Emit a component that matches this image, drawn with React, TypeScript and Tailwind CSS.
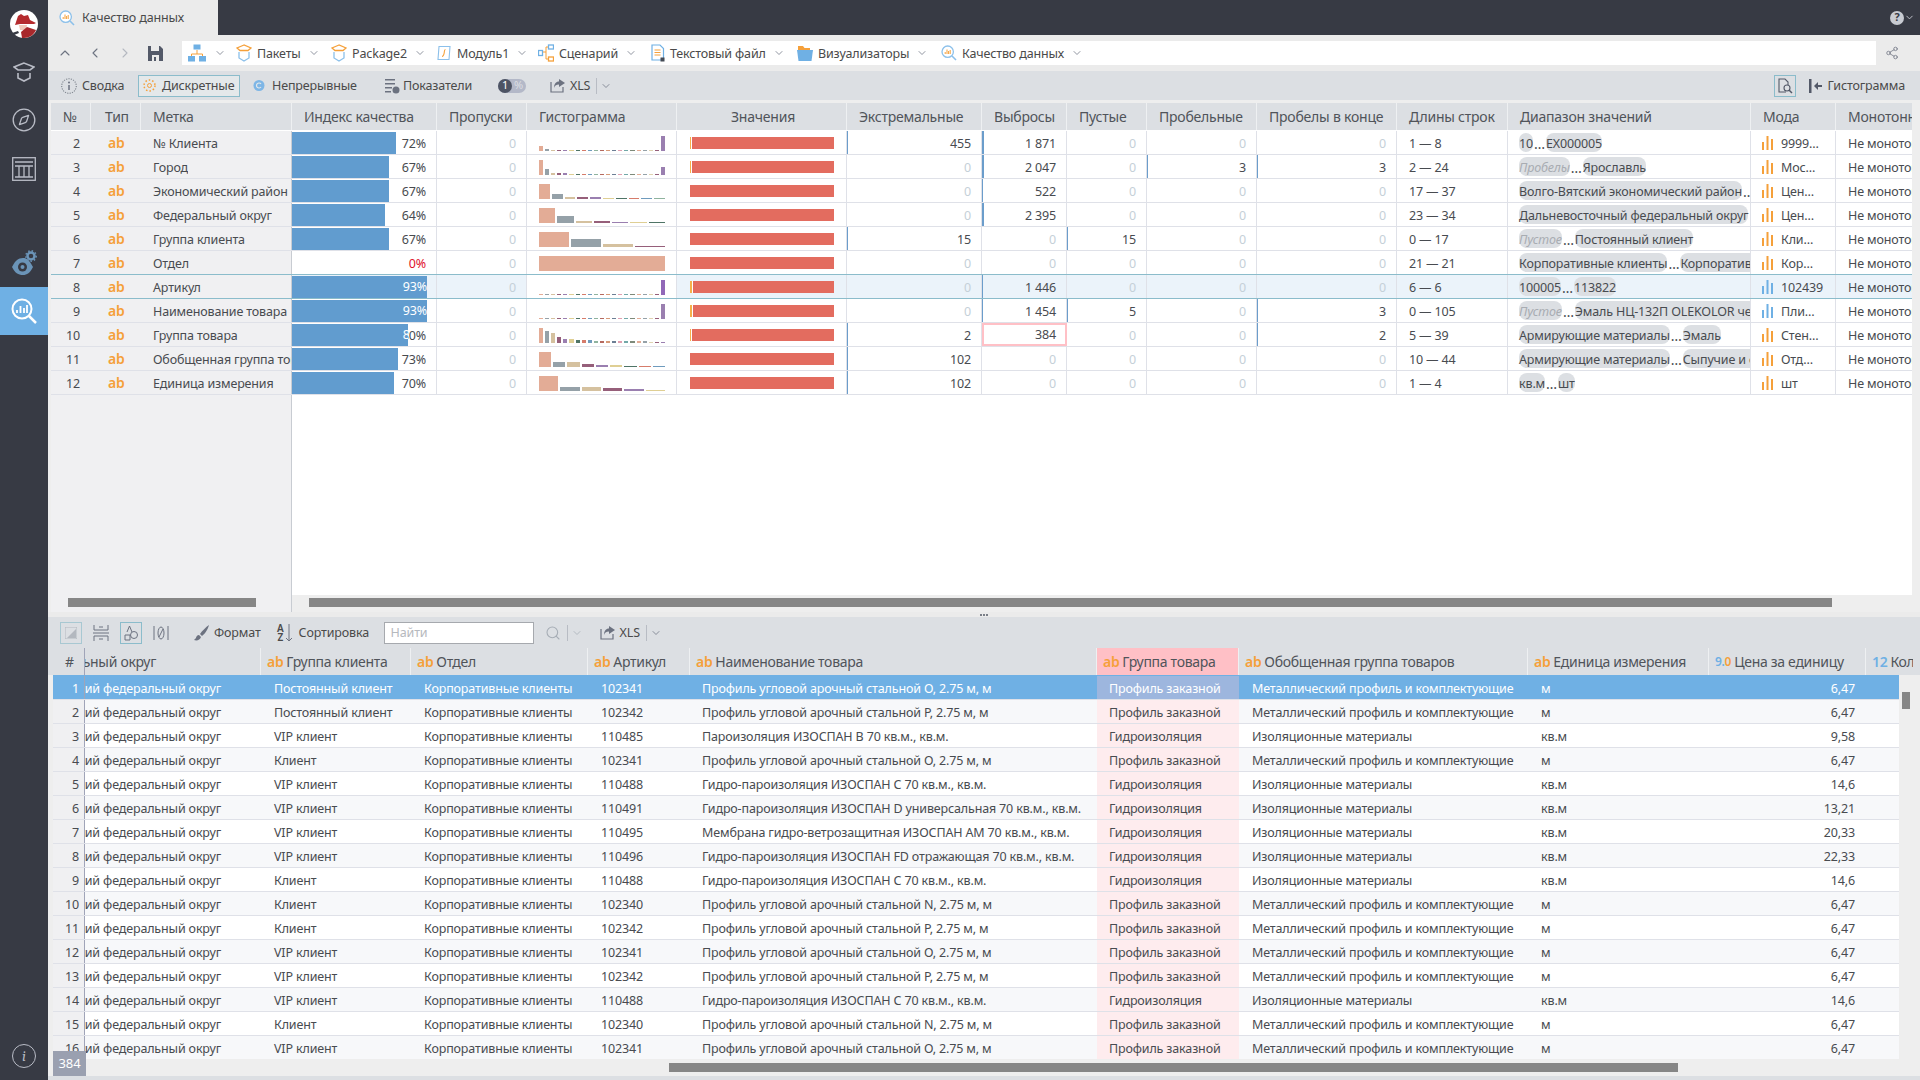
import React from "react";
import { ChevronDown, ChevronLeft, ChevronRight, ChevronUp, Compass, Search, Share2 } from "lucide-react";

const Chev = () => <ChevronDown size={12} strokeWidth={1.5} className="text-[#6b7280] shrink-0" />;

const QualityIcon = ({ size = 16 }: { size?: number }) => (
  <svg width={size} height={size} viewBox="0 0 16 16" fill="none" className="shrink-0">
    <circle cx="6.7" cy="6.7" r="5.7" stroke="#8cc0ea" strokeWidth="1.3" fill="#fff" />
    <path d="M11 11l4 4" stroke="#8cc0ea" strokeWidth="1.6" />
    <path d="M4.2 9V7M6 9V4.5M7.6 9V6M9.2 9V5" stroke="#f5a03a" strokeWidth="1" />
  </svg>
);

const BoxIcon = () => (
  <svg width="16" height="18" viewBox="0 0 16 18" fill="none" className="shrink-0">
    <path d="M8 1L1 4l3 2.5h8L15 4 8 1z" stroke="#f5a03a" strokeWidth="1.3" />
    <path d="M3 8v6l5 3 5-3V8" stroke="#8cc0ea" strokeWidth="1.3" />
  </svg>
);

const NavItem = ({ icon, label, className }: { icon: React.ReactNode; label: string; className: string }) => (
  <div className={`flex items-center ${className}`}>
    {icon}
    <span className="ml-[5px] mr-[7px] pt-[2px] whitespace-nowrap">{label}</span>
    <Chev />
  </div>
);

const TreeIcon = () => (
  <svg width="18" height="18" viewBox="0 0 18 18" fill="none" className="shrink-0">
    <rect x="5.5" y="0.5" width="7" height="5" fill="#6fb0e4" />
    <path d="M9 6v4M3.5 12v-2h11v2" stroke="#f5a03a" />
    <rect x="0" y="12" width="7" height="5.5" fill="#6fb0e4" />
    <rect x="11" y="12" width="7" height="5.5" fill="#6fb0e4" />
  </svg>
);

const ScriptIcon = () => (
  <svg width="16" height="16" viewBox="0 0 16 16" fill="none" className="shrink-0">
    <path d="M3 1.5h11l-1 13H2z" stroke="#8cc0ea" strokeWidth="1.1" />
    <path d="M9.5 4.5c-1.5 0-1 2-1.3 3.5S7.5 11.5 6 11.5" stroke="#f5a03a" strokeWidth="1.1" />
  </svg>
);

const ScenarioIcon = () => (
  <svg width="16" height="18" viewBox="0 0 16 18" fill="none" className="shrink-0">
    <rect x="0.5" y="6.5" width="4" height="5" stroke="#6fb0e4" strokeWidth="1.3" />
    <rect x="10.5" y="1" width="5" height="4" stroke="#6fb0e4" strokeWidth="1.3" />
    <rect x="10.5" y="13" width="5" height="4" stroke="#f5a03a" strokeWidth="1.3" />
    <path d="M5 8h3V3h2M8 8v7h2" stroke="#f5a03a" />
  </svg>
);

const FileIcon = () => (
  <svg width="14" height="18" viewBox="0 0 14 18" fill="none" className="shrink-0">
    <path d="M1 1h8l3.5 3.5V16H1z" stroke="#6fb0e4" strokeWidth="1.2" />
    <path d="M3.5 6h6M3.5 8.5h6M3.5 11h6" stroke="#f5a03a" />
    <rect x="9.5" y="13.5" width="4" height="4" fill="#444b55" />
  </svg>
);

const FolderIcon = () => (
  <svg width="16" height="15" viewBox="0 0 16 15" className="shrink-0">
    <path d="M1 0h5l1.5 2H13v2H1z" fill="#f5a03a" />
    <path d="M0 4h16l-1.5 11h-13z" fill="#6fb0e4" />
  </svg>
);

const TopBar = () => (
  <div className="h-[35px] flex bg-[#373a44] relative shrink-0">
    <div className="w-[170px] bg-[#ebebeb] flex items-center pl-[11px] gap-[7px] text-[#4a4a4a]">
      <QualityIcon />
      <span className="pt-[2px]">Качество данных</span>
    </div>
    <div className="ml-auto mr-[5px] flex items-center text-[#c8cbd2]">
      <div className="w-[14px] h-[14px] rounded-full bg-[#c8cbd2] text-[#373a44] text-[11px] font-bold flex items-center justify-center">?</div>
      <ChevronDown size={11} />
    </div>
  </div>
);

const NavBar = () => (
  <div className="h-[36px] flex items-center bg-[#ebebeb] shrink-0">
    <div className="w-[134px] flex items-center pl-[9px] text-[#6c7280]">
      <ChevronUp size={16} strokeWidth={1.6} />
      <ChevronLeft size={16} strokeWidth={1.6} className="ml-[14px]" />
      <ChevronRight size={16} strokeWidth={1.6} className="ml-[14px] text-[#b4b8c0]" />
      <svg width="15" height="15" viewBox="0 0 15 15" className="ml-[15px]">
        <path d="M0 0h12l3 3v12H0z" fill="#535968" />
        <rect x="3" y="0" width="8" height="5" fill="#ebebeb" />
        <rect x="4" y="9" width="7" height="6" fill="#ebebeb" />
        <rect x="6" y="11" width="2" height="4" fill="#535968" />
      </svg>
    </div>
    <div className="w-[1694px] h-[24px] bg-white flex items-center pl-[6px] text-[#4a4a4a]">
      <div className="w-[48px] flex items-center gap-[8px]">
        <TreeIcon />
        <Chev />
      </div>
      <NavItem className="w-[95px]" icon={<BoxIcon />} label="Пакеты" />
      <NavItem className="w-[105px]" icon={<BoxIcon />} label="Package2" />
      <NavItem className="w-[102px]" icon={<ScriptIcon />} label="Модуль1" />
      <NavItem className="w-[113px]" icon={<ScenarioIcon />} label="Сценарий" />
      <NavItem className="w-[146px]" icon={<FileIcon />} label="Текстовый файл" />
      <NavItem className="w-[144px]" icon={<FolderIcon />} label="Визуализаторы" />
      <NavItem className="w-[150px]" icon={<QualityIcon />} label="Качество данных" />
    </div>
    <Share2 size={14} strokeWidth={1.3} className="ml-[9px] text-[#6c7280]" />
  </div>
);

const XlsButton = () => (
  <div className="flex items-center text-[#4a4a4a]">
    <svg width="16" height="15" viewBox="0 0 16 15" fill="none">
      <path d="M1 4v10h12V9" stroke="#6c7280" strokeWidth="1.2" />
      <path d="M9 1l6 4-6 4V6.5C6 6.5 4.5 8 4 10c0-4 2-6.5 5-6.5z" fill="#6c7280" />
    </svg>
    <span className="ml-[4px] pt-[2px]">XLS</span>
    <div className="w-px h-[16px] bg-[#b8bcc4] ml-[6px] mr-[3px]" />
    <Chev />
  </div>
);

const SubBar = () => (
  <div className="h-[29px] flex items-center bg-[#dcdfe3] text-[#4a4a4a] shrink-0">
    <div className="w-[29px] flex items-center justify-end">
      <svg width="16" height="16" viewBox="0 0 16 16" fill="none">
        <circle cx="8" cy="8" r="7.3" stroke="#7a808a" strokeWidth="1.1" strokeDasharray="1.2 1.2" />
        <circle cx="8" cy="4.5" r="1" fill="#6c7280" />
        <path d="M8 7v5" stroke="#6c7280" strokeWidth="1.5" />
      </svg>
    </div>
    <span className="ml-[5px] w-[56px] pt-[2px]">Сводка</span>
    <div className="w-[102px] h-[22px] border border-[#8bbccb] flex items-center pl-[4px] gap-[6px] bg-[#e4e8ea]">
      <svg width="13" height="13" viewBox="0 0 13 13" fill="none">
        <circle cx="6.5" cy="6.5" r="5.5" stroke="#f5a03a" strokeWidth="1.5" strokeDasharray="1.5 2" />
        <circle cx="6.5" cy="6.5" r="2" stroke="#f5a03a" />
      </svg>
      <span className="pt-[2px]">Дискретные</span>
    </div>
    <div className="ml-[13px] w-[132px] flex items-center gap-[7px]">
      <svg width="12" height="13" viewBox="0 0 12 13" fill="none">
        <circle cx="6" cy="6.5" r="5.5" fill="#7eb6e6" />
        <path d="M8 5a2.5 2.5 0 1 0 0 3" stroke="#e4e8ea" strokeWidth="1.2" />
      </svg>
      <span className="pt-[2px]">Непрерывные</span>
    </div>
    <div className="flex items-center w-[113px] gap-[3px]">
      <svg width="15" height="16" viewBox="0 0 15 16" fill="#6c7280">
        <path d="M0 1h10v1.5H0zM0 5h10v1.5H0zM0 9h7v1.5H0zM0 13h6v1.5H0z" />
        <circle cx="11" cy="12" r="3.5" />
      </svg>
      <span className="pt-[2px]">Показатели</span>
    </div>
    <div className="w-[28px] h-[14px] rounded-full bg-[#b3b8c8] flex items-center text-[11px] text-white">
      <div className="w-[14px] h-[14px] rounded-full bg-[#4d5464] flex items-center justify-center">1</div>
      <span className="ml-[2px] text-[#dcdfe3]">%</span>
    </div>
    <div className="ml-[24px]">
      <XlsButton />
    </div>
    <div className="ml-auto w-[22px] h-[22px] border border-[#8bbccb] flex items-center justify-center mr-[13px]">
      <svg width="15" height="16" viewBox="0 0 15 16" fill="none" stroke="#535968" strokeWidth="1.1">
        <path d="M8 14H1V1h6l3 3v3" />
        <circle cx="9" cy="10" r="3" />
        <path d="M11 12l3 3" strokeWidth="1.5" />
      </svg>
    </div>
    <svg width="14" height="14" viewBox="0 0 14 14">
      <rect x="0" y="0" width="2.5" height="14" fill="#535968" />
      <path d="M5 7l4-4v3h4v2H9v3z" fill="#535968" />
    </svg>
    <span className="ml-[4px] mr-[15px] pt-[2px]">Гистограмма</span>
  </div>
);

const palette = [
  "bg-[#e3ac96]", "bg-[#95a1a8]", "bg-[#d5c19f]", "bg-[#965f7a]", "bg-[#9a7fb0]", "bg-[#dfcf94]", "bg-[#4f7466]",
  "bg-[#d67c6b]", "bg-[#6f9bbd]", "bg-[#8fb39e]", "bg-[#b5695f]", "bg-[#d69a78]", "bg-[#6c7f95]", "bg-[#e09fb0]",
  "bg-[#72a8a8]", "bg-[#7e8a7a]", "bg-[#e3ac96]", "bg-[#95a1a8]", "bg-[#dfd3b0]", "bg-[#965f7a]",
];

const ones = (n: number) => Array.from({ length: n }, () => 1);

interface TopRow {
  no: number;
  label: string;
  pct: number;
  hist: number[];
  orange: number;
  extreme: number;
  outliers: string;
  empty: number;
  spaces: number;
  trailing: number;
  lengths: string;
  from: string;
  to: string;
  mode: string;
  marks: string[];
}

const topRows: TopRow[] = [
  { no: 2, label: "№ Клиента", pct: 72, hist: [5, 2, ...ones(18), 15], orange: 1, extreme: 455, outliers: "1 871", empty: 0, spaces: 0, trailing: 0, lengths: "1 — 8", from: "10", to: "EX000005", mode: "9999…", marks: ["e1", "o2"] },
  { no: 3, label: "Город", pct: 67, hist: [15, 6, 2, 2, 2, ...ones(15), 8], orange: 1, extreme: 0, outliers: "2 047", empty: 0, spaces: 3, trailing: 3, lengths: "2 — 24", from: "Пробелы", to: "Ярославль", mode: "Мос…", marks: ["o2", "s1", "t1"] },
  { no: 4, label: "Экономический район", pct: 67, hist: [15, 5, 2, 2, 2, 1, 1, 1, 1, 1], orange: 0, extreme: 0, outliers: "522", empty: 0, spaces: 0, trailing: 0, lengths: "17 — 37", from: "Волго-Вятский экономический район", to: "", mode: "Цен…", marks: ["o1"] },
  { no: 5, label: "Федеральный округ", pct: 64, hist: [15, 7, 2, 2, 1, 1, 1], orange: 0, extreme: 0, outliers: "2 395", empty: 0, spaces: 0, trailing: 0, lengths: "23 — 34", from: "Дальневосточный федеральный округ", to: "", mode: "Цен…", marks: ["o2"] },
  { no: 6, label: "Группа клиента", pct: 67, hist: [15, 8, 3, 1], orange: 0, extreme: 15, outliers: "0", empty: 15, spaces: 0, trailing: 0, lengths: "0 — 17", from: "Пустое", to: "Постоянный клиент", mode: "Кли…", marks: ["e1", "m1"] },
  { no: 7, label: "Отдел", pct: 0, hist: [15], orange: 0, extreme: 0, outliers: "0", empty: 0, spaces: 0, trailing: 0, lengths: "21 — 21", from: "Корпоративные клиенты", to: "Корпоративные клиенты", mode: "Кор…", marks: [] },
  { no: 8, label: "Артикул", pct: 93, hist: [...ones(20), 15], orange: 2, extreme: 0, outliers: "1 446", empty: 0, spaces: 0, trailing: 0, lengths: "6 — 6", from: "100005", to: "113822", mode: "102439", marks: ["o1"] },
  { no: 9, label: "Наименование товара", pct: 93, hist: [...ones(20), 15], orange: 2, extreme: 0, outliers: "1 454", empty: 5, spaces: 0, trailing: 3, lengths: "0 — 105", from: "Пустое", to: "Эмаль НЦ-132П OLEKOLOR черная", mode: "Пли…", marks: ["o1", "m1", "t1"] },
  { no: 10, label: "Группа товара", pct: 80, hist: [15, 12, 10, 6, 4, 4, 3, 3, 3, 2, 2, 2, 2, 2, 2, 2, 2, 2, 1, 1, 1], orange: 1, extreme: 2, outliers: "384", empty: 0, spaces: 0, trailing: 2, lengths: "5 — 39", from: "Армирующие материалы", to: "Эмаль", mode: "Стен…", marks: ["e1", "t1"] },
  { no: 11, label: "Обобщенная группа товаров", pct: 73, hist: [15, 5, 5, 3, 2, 2, 1, 1, 1], orange: 0, extreme: 102, outliers: "0", empty: 0, spaces: 0, trailing: 0, lengths: "10 — 44", from: "Армирующие материалы", to: "Сыпучие и смеси", mode: "Отд…", marks: ["e1"] },
  { no: 12, label: "Единица измерения", pct: 70, hist: [15, 4, 4, 3, 2, 1], orange: 0, extreme: 102, outliers: "0", empty: 0, spaces: 0, trailing: 0, lengths: "1 — 4", from: "кв.м", to: "шт", mode: "шт", marks: ["e1"] },
];

const HeadCell = ({ className, children }: { className: string; children: React.ReactNode }) => (
  <div className={`h-full flex items-center border-r border-[#eef0f2] whitespace-nowrap overflow-hidden shrink-0 ${className}`}>{children}</div>
);

const TopHeader = () => (
  <div className="h-[27px] flex bg-[#dcdfe3] text-[#50545a] text-[14px] tracking-[-0.22px] shrink-0">
    <HeadCell className="w-[40px] pl-[12px]">№</HeadCell>
    <HeadCell className="w-[50px] pl-[14px]">Тип</HeadCell>
    <HeadCell className="w-[151px] pl-[12px]">Метка</HeadCell>
    <HeadCell className="w-[145px] pl-[12px]">Индекс качества</HeadCell>
    <HeadCell className="w-[90px] pl-[12px]">Пропуски</HeadCell>
    <HeadCell className="w-[150px] pl-[12px]">Гистограмма</HeadCell>
    <HeadCell className="w-[170px] justify-center pl-[3px]">Значения</HeadCell>
    <HeadCell className="w-[135px] pl-[12px]">Экстремальные</HeadCell>
    <HeadCell className="w-[85px] pl-[12px]">Выбросы</HeadCell>
    <HeadCell className="w-[80px] pl-[12px]">Пустые</HeadCell>
    <HeadCell className="w-[110px] pl-[12px]">Пробельные</HeadCell>
    <HeadCell className="w-[140px] pl-[12px]">Пробелы в конце</HeadCell>
    <HeadCell className="w-[111px] pl-[12px]">Длины строк</HeadCell>
    <HeadCell className="w-[243px] pl-[12px]">Диапазон значений</HeadCell>
    <HeadCell className="w-[85px] pl-[12px]">Мода</HeadCell>
    <HeadCell className="w-[76px] pl-[12px] border-r-0">Монотонность</HeadCell>
  </div>
);

const NumCell = ({ value, width, mark }: { value: string | number; width: string; mark?: string }) => {
  const zero = value === 0 || value === "0";
  const markClass = mark === "2" ? "border-l-2 border-l-[#6b9dcb]" : mark === "1" ? "border-l border-l-[#6b9dcb]" : "";
  return (
    <div className={`h-full flex items-center justify-end pt-[3px] pr-[10px] border-r border-[#dfe1e8] shrink-0 ${width} ${markClass} ${zero ? "text-[#c5d0d8]" : ""}`}>
      {value}
    </div>
  );
};

const markOf = (row: TopRow, key: string) => row.marks.find((m) => m[0] === key)?.[1];

const PctCell = ({ pct }: { pct: number }) => {
  const inner = "w-[145px] h-full flex items-center justify-end pt-[3px] pr-[10px]";
  return (
    <div className={`relative shrink-0 border-r border-[#dfe1e8] ${inner} ${pct === 0 ? "text-[#e0112b]" : ""}`}>
      {pct}%
      {pct > 0 && (
        <div className="absolute left-0 top-[1px] bottom-0 bg-[#619ccf] overflow-hidden text-white" style={{ width: pct * 1.45 }}>
          <div className={`${inner} -mt-px`}>{pct}%</div>
        </div>
      )}
    </div>
  );
};

const Histogram = ({ bars, strong }: { bars: number[]; strong: boolean }) => (
  <div className="w-[150px] h-full bg-white border-r border-[#dfe1e8] pl-[12px] shrink-0">
    <div className="w-[126px] h-[20px] flex items-end gap-[2px]">
      {bars.map((h, i) => {
        const last = bars.length > 15 && i === bars.length - 1;
        const color = last ? (strong ? "bg-[#9168b8]" : "bg-[#9a7fb0]") : palette[i % palette.length];
        return <div key={i} className={`flex-1 ${color}`} style={{ height: h }} />;
      })}
    </div>
  </div>
);

const ValueCell = ({ orange }: { orange: number }) => (
  <div className="w-[170px] h-full flex items-center pl-[13px] border-r border-[#dfe1e8] shrink-0">
    <div className="w-[144px] h-[12px] flex bg-[#e36c5f]">
      {orange > 0 && (
        <div className={`h-full border-r border-white bg-[#f5b04a] box-content ${orange === 2 ? "w-[2px]" : "w-[1px]"}`} />
      )}
    </div>
  </div>
);

const Chip = ({ text }: { text: string }) => {
  const muted = text === "Пробелы" || text === "Пустое";
  return (
    <span className={`h-[19px] leading-[21px] rounded-[8px] bg-[#dcdfe3] whitespace-nowrap ${muted ? "italic text-[#a8acb2]" : ""}`}>{text}</span>
  );
};

const RangeCell = ({ from, to }: { from: string; to: string }) => (
  <div className="w-[243px] h-full flex items-center pl-[11px] overflow-hidden border-r border-[#dfe1e8] shrink-0">
    <Chip text={from} />
    <span className="w-[13px] text-center text-[14px] pt-[2px] shrink-0">…</span>
    {to && <Chip text={to} />}
  </div>
);

const ModeCell = ({ value, blue }: { value: string; blue: boolean }) => (
  <div className="w-[85px] h-full flex items-center pl-[11px] border-r border-[#dfe1e8] shrink-0">
    <svg width="11" height="14" viewBox="0 0 11 14" className={blue ? "text-[#6fb0e4]" : "text-[#f5a03a]"} fill="currentColor">
      <rect x="0" y="6" width="2" height="8" />
      <rect x="4.5" y="0" width="2" height="14" />
      <rect x="9" y="3" width="2" height="11" />
    </svg>
    <span className="ml-[8px] pt-[3px]">{value}</span>
  </div>
);

const TopTableRow = ({ row, index }: { row: TopRow; index: number }) => {
  const active = index === 6;
  const teal = index === 6 || index === 7;
  return (
    <div className={`h-[24px] flex border-t shrink-0 ${index === 0 ? "border-t-white" : teal ? "border-t-[#8bbccb]" : "border-t-[#dfe1e8]"} ${active ? "bg-[#ebf3fa]" : "bg-white"}`}>
      <div className="w-[241px] h-full flex items-center pt-[3px] bg-[#f0f0f2] border-r border-[#c8ccd2] shrink-0">
        <div className="w-[29px] text-right shrink-0">{row.no}</div>
        <div className="w-[61px] pl-[28px] -mt-[3px] text-[#f5a03a] text-[14px] font-semibold shrink-0">ab</div>
        <div className="pl-[12px] whitespace-nowrap overflow-hidden">{row.label}</div>
      </div>
      <PctCell pct={row.pct} />
      <NumCell value={0} width="w-[90px]" />
      <Histogram bars={row.hist} strong={row.no === 8} />
      <ValueCell orange={row.orange} />
      <NumCell value={row.extreme} width="w-[135px]" mark={markOf(row, "e")} />
      {row.outliers === "384" ? (
        <div className="w-[85px] h-full flex items-center justify-end pt-[2px] pr-[9px] border-2 border-[#ffc0c6] shrink-0">384</div>
      ) : (
        <NumCell value={row.outliers} width="w-[85px]" mark={markOf(row, "o")} />
      )}
      <NumCell value={row.empty} width="w-[80px]" mark={markOf(row, "m")} />
      <NumCell value={row.spaces} width="w-[110px]" mark={markOf(row, "s")} />
      <NumCell value={row.trailing} width="w-[140px]" mark={markOf(row, "t")} />
      <div className="w-[111px] h-full flex items-center pt-[3px] pl-[12px] border-r border-[#dfe1e8] shrink-0">{row.lengths}</div>
      <RangeCell from={row.from} to={row.to} />
      <ModeCell value={row.mode} blue={row.no === 8 || row.no === 9} />
      <div className="w-[76px] h-full flex items-center pt-[3px] pl-[12px] overflow-hidden whitespace-nowrap shrink-0">Не монотонно</div>
    </div>
  );
};

const TopTable = () => (
  <div className="h-[512px] flex flex-col bg-[#eeeeee] pl-[3px] pr-[8px] pt-[3px] shrink-0">
    <TopHeader />
    {topRows.map((row, i) => (
      <TopTableRow key={row.no} row={row} index={i} />
    ))}
    <div className="flex-1 flex border-t border-t-[#dfe1e8] bg-white">
      <div className="w-[241px] bg-[#f0f0f2] border-r border-[#c8ccd2]" />
    </div>
    <div className="h-[17px] flex shrink-0">
      <div className="w-[241px] bg-[#f0f0f2] border-r border-[#c8ccd2] pl-[17px] pt-[3px]">
        <div className="w-[188px] h-[9px] bg-[#868686]" />
      </div>
      <div className="ml-[17px] mt-[3px] w-[1523px] h-[9px] bg-[#868686]" />
    </div>
  </div>
);

const Splitter = () => (
  <div className="h-[5px] bg-[#ebebeb] flex justify-center items-center gap-[1px] shrink-0">
    <div className="w-[2px] h-[2px] bg-[#7a7f88]" />
    <div className="w-[2px] h-[2px] bg-[#7a7f88]" />
    <div className="w-[2px] h-[2px] bg-[#7a7f88]" />
  </div>
);

const BottomBar = () => (
  <div className="h-[31px] flex items-center bg-[#dcdfe3] text-[#4a4a4a] pl-[12px] shrink-0">
    <div className="w-[22px] h-[22px] border border-[#a8c8d2] flex items-center justify-center">
      <svg width="12" height="12" viewBox="0 0 12 12">
        <path d="M0 0h12v12H0z" fill="none" stroke="#b3b8bf" />
        <path d="M11 2v9H2z" fill="#b3b8bf" />
      </svg>
    </div>
    <svg width="16" height="18" viewBox="0 0 16 18" fill="none" stroke="#6c7280" className="ml-[11px]">
      <path d="M1 1v5h14V1M1 17v-5h14v5M0 9h16" />
      <path d="M6 3h4M6 15h4" />
    </svg>
    <div className="ml-[11px] w-[22px] h-[22px] border border-[#8bbccb] flex items-center justify-center">
      <svg width="14" height="16" viewBox="0 0 14 16" fill="none" stroke="#6c7280">
        <path d="M3 7l2.5-6L8 7M1 10h5v5H1z" />
        <circle cx="10" cy="10" r="3.5" />
      </svg>
    </div>
    <svg width="16" height="14" viewBox="0 0 16 14" fill="none" stroke="#6c7280" className="ml-[11px]">
      <path d="M1 0v14M15 0v14" />
      <ellipse cx="8" cy="7" rx="3" ry="6" />
      <path d="M6 11l4-8" />
    </svg>
    <svg width="16" height="16" viewBox="0 0 16 16" className="ml-[25px]" fill="#6c7280">
      <path d="M15 0c-3 2-7 6-9 9l2 2c3-2 6-7 7-11zM5 10c-2 0-3 2-3 3l-2 2c3 1 6 0 7-3z" />
    </svg>
    <span className="ml-[4px] w-[46px] pt-[2px]">Формат</span>
    <div className="ml-[17px] flex items-center text-[#4a4a4a]">
      <div className="text-[10px] leading-[9px] text-center font-semibold">
        A
        <br />Z
      </div>
      <svg width="8" height="18" viewBox="0 0 8 18" fill="none" stroke="#6c7280" className="ml-[1px]">
        <path d="M4 0v17M1 14l3 3 3-3" />
      </svg>
    </div>
    <span className="ml-[6px] w-[71px] pt-[2px] whitespace-nowrap">Сортировка</span>
    <div className="ml-[14px] w-[150px] h-[22px] bg-white border border-[#a6a9ae] flex items-center pl-[6px] pt-px text-[#b6b9be]">Найти</div>
    <Search size={16} strokeWidth={1.6} className="ml-[11px] text-[#a6adb5]" />
    <div className="w-px h-[16px] bg-[#b8bcc4] ml-[6px] mr-[3px]" />
    <ChevronDown size={12} strokeWidth={1.5} className="text-[#a6adb5]" />
    <div className="ml-[17px]">
      <XlsButton />
    </div>
  </div>
);

const names = [
  "Профиль угловой арочный стальной О, 2.75 м, м",
  "Профиль угловой арочный стальной Р, 2.75 м, м",
  "Пароизоляция ИЗОСПАН В 70 кв.м., кв.м.",
  "Профиль угловой арочный стальной О, 2.75 м, м",
  "Гидро-пароизоляция ИЗОСПАН С 70 кв.м., кв.м.",
  "Гидро-пароизоляция ИЗОСПАН D универсальная 70 кв.м., кв.м.",
  "Мембрана гидро-ветрозащитная ИЗОСПАН АМ 70 кв.м., кв.м.",
  "Гидро-пароизоляция ИЗОСПАН FD отражающая 70 кв.м., кв.м.",
  "Гидро-пароизоляция ИЗОСПАН С 70 кв.м., кв.м.",
  "Профиль угловой арочный стальной N, 2.75 м, м",
  "Профиль угловой арочный стальной Р, 2.75 м, м",
  "Профиль угловой арочный стальной О, 2.75 м, м",
  "Профиль угловой арочный стальной Р, 2.75 м, м",
  "Гидро-пароизоляция ИЗОСПАН С 70 кв.м., кв.м.",
  "Профиль угловой арочный стальной N, 2.75 м, м",
  "Профиль угловой арочный стальной О, 2.75 м, м",
];
const clients = ["Постоянный клиент", "Постоянный клиент", "VIP клиент", "Клиент", "VIP клиент", "VIP клиент", "VIP клиент", "VIP клиент", "Клиент", "Клиент", "Клиент", "VIP клиент", "VIP клиент", "VIP клиент", "Клиент", "VIP клиент"];
const articles = ["102341", "102342", "110485", "102341", "110488", "110491", "110495", "110496", "110488", "102340", "102342", "102341", "102342", "110488", "102340", "102341"];
const prices = ["6,47", "6,47", "9,58", "6,47", "14,6", "13,21", "20,33", "22,33", "14,6", "6,47", "6,47", "6,47", "6,47", "14,6", "6,47", "6,47"];

const Ab = () => <span className="text-[#f5a03a] font-semibold mr-[3px]">ab</span>;

const BottomHeader = () => (
  <div className="h-[27px] flex pl-[5px] bg-[#dcdfe3] text-[#50545a] text-[14px] tracking-[-0.3px] shrink-0">
    <div className="w-[32px] h-full flex items-center pl-[12px] border-r border-[#a0a4b8] shrink-0">#</div>
    <HeadCell className="w-[176px] justify-end pr-[104px]">Федеральный округ</HeadCell>
    <HeadCell className="w-[150px] pl-[6px]"><Ab />Группа клиента</HeadCell>
    <HeadCell className="w-[177px] pl-[6px]"><Ab />Отдел</HeadCell>
    <HeadCell className="w-[102px] pl-[6px]"><Ab />Артикул</HeadCell>
    <HeadCell className="w-[407px] pl-[6px]"><Ab />Наименование товара</HeadCell>
    <HeadCell className="w-[142px] pl-[6px] bg-[#ffc0c6]"><Ab />Группа товара</HeadCell>
    <HeadCell className="w-[289px] pl-[6px]"><Ab />Обобщенная группа товаров</HeadCell>
    <HeadCell className="w-[181px] pl-[6px]"><Ab />Единица измерения</HeadCell>
    <HeadCell className="w-[157px] pl-[6px]">
      <span className="font-semibold mr-[3px] text-[12px]"><span className="text-[#6fb0e4]">9.</span><span className="text-[#f5a03a]">0</span></span>Цена за единицу
    </HeadCell>
    <HeadCell className="w-[47px] pl-[6px] border-r-0"><span className="text-[#6fb0e4] font-semibold mr-[3px]">12</span>Количество</HeadCell>
  </div>
);

const BottomRow = ({ index }: { index: number }) => {
  const selected = index === 0;
  const group = names[index].startsWith("Профиль") ? "Профиль заказной" : "Гидроизоляция";
  const general = group === "Гидроизоляция" ? "Изоляционные материалы" : "Металлический профиль и комплектующие";
  const unit = group === "Гидроизоляция" ? "кв.м" : "м";
  const cell = "h-full flex items-center pt-[3px] whitespace-nowrap overflow-hidden shrink-0";
  return (
    <div className={`h-[24px] flex border-t shrink-0 ${selected ? "border-t-[#6fb0e4] bg-[#6fb0e4] text-white" : index % 2 === 1 ? "border-t-[#dfe1e8] bg-[#f7f8fa]" : "border-t-[#dfe1e8] bg-white"}`}>
      <div className={`w-[32px] justify-end pr-[5px] border-r border-[#a0a4b8] ${cell} ${selected ? "" : "bg-[#f0f0f2]"}`}>{index + 1}</div>
      <div className={`w-[176px] justify-end pr-[40px] ${cell}`}>Приволжский федеральный округ</div>
      <div className={`w-[150px] pl-[13px] ${cell}`}>{clients[index]}</div>
      <div className={`w-[177px] pl-[13px] ${cell}`}>Корпоративные клиенты</div>
      <div className={`w-[102px] pl-[13px] ${cell}`}>{articles[index]}</div>
      <div className={`w-[407px] pl-[12px] ${cell}`}>{names[index]}</div>
      <div className={`w-[142px] pl-[12px] ${cell} ${selected ? "bg-[#9db6de]" : "bg-[#feecee]"}`}>{group}</div>
      <div className={`w-[289px] pl-[13px] ${cell}`}>{general}</div>
      <div className={`w-[181px] pl-[13px] ${cell}`}>{unit}</div>
      <div className={`w-[157px] justify-end pr-[11px] ${cell}`}>{prices[index]}</div>
      <div className="w-[33px] shrink-0" />
    </div>
  );
};

const BottomTable = () => (
  <div className="flex-1 bg-[#eeeeee] flex flex-col relative min-h-0">
    <BottomHeader />
    <div className="flex">
      <div className="w-[1851px] pl-[5px] flex flex-col shrink-0">
        {names.map((_, i) => (
          <BottomRow key={i} index={i} />
        ))}
      </div>
      <div className="ml-[3px] mt-[17px] w-[8px] h-[17px] bg-[#868686] shrink-0" />
    </div>
    <div className="ml-[621px] mt-[4px] w-[1009px] h-[9px] bg-[#868686] shrink-0" />
    <div className="mt-[4px] flex-1 bg-[#dcdfe3]" />
    <div className="absolute left-[5px] bottom-[4px] w-[33px] h-[25px] bg-[#9aa0b0] text-white flex items-center justify-center text-[13px]">384</div>
  </div>
);

const Sidebar = () => (
  <aside className="w-[48px] h-full bg-[#373a44] flex flex-col items-center shrink-0 text-[#b9bcc6]">
    <svg width="28" height="28" viewBox="0 0 28 28" className="mt-[10px] shrink-0">
      <circle cx="14" cy="14" r="14" fill="#fff" />
      <path d="M5 15l3-9 3-2 3 2 4-1 2 5 6 3-2 1H10z" fill="#b52b2e" />
      <path d="M9 15h8l-1 5H10z" fill="#f0c8b8" />
      <path d="M12 28l-1-6 6-5 9 3c-2 5-7 8-12 8z" fill="#a8282c" />
      <path d="M2 23l6-2 1 2-5 2z" fill="#373a44" />
    </svg>
    <svg width="22" height="22" viewBox="0 0 22 22" fill="none" stroke="currentColor" strokeWidth="1.6" className="mt-[23px] shrink-0">
      <path d="M11 2L1 6l4 3h12l4-3-10-4z" />
      <path d="M5 12v5l6 3 6-3v-5" />
    </svg>
    <Compass size={26} strokeWidth={1.2} className="mt-[24px] shrink-0" />
    <svg width="24" height="24" viewBox="0 0 24 24" fill="none" stroke="currentColor" strokeWidth="1.3" className="mt-[24px] shrink-0">
      <rect x="0.7" y="0.7" width="22.6" height="22.6" />
      <path d="M3 5h18M3 9h18M7 9v11M12 9v11M17 9v11M3 20h18" />
    </svg>
    <svg width="26" height="26" viewBox="0 0 26 26" className="mt-[69px] shrink-0" fill="none">
      <path d="M1 17c3-6 6-9 11-9 2 0 3 .5 4 1l3 3 3 5c-3 6-6 8-10 8-5 0-8-2-11-8z" fill="#6b94b8" />
      <circle cx="11.5" cy="17" r="4.5" fill="#373a44" />
      <circle cx="11.5" cy="17" r="2" fill="#6b94b8" />
      <circle cx="20" cy="6" r="3.5" stroke="#6b94b8" strokeWidth="2.5" />
      <circle cx="20" cy="6" r="5.2" stroke="#6b94b8" strokeWidth="1.5" strokeDasharray="1.5 2" />
    </svg>
    <div className="mt-[11px] w-[48px] h-[48px] bg-[#6fb0e4] flex items-center justify-center shrink-0">
      <svg width="26" height="26" viewBox="0 0 26 26" fill="none" stroke="#fff">
        <circle cx="11" cy="11" r="9.5" strokeWidth="2" />
        <path d="M18 18l7 7" strokeWidth="2.5" />
        <path d="M6 15v-3M9.5 15V8M13 15v-5M16 15V7" strokeWidth="1.8" />
      </svg>
    </div>
    <div className="mt-auto mb-[12px] w-[24px] h-[24px] rounded-full border-[1.5px] border-[#b9bcc6] flex items-center justify-center italic font-serif text-[15px]">i</div>
  </aside>
);

export default function App() {
  return (
    <div className="w-[1920px] h-[1080px] flex overflow-hidden bg-[#eeeeee] text-[#484b50] text-[12.5px] tracking-[-0.15px] font-['Noto_Sans',sans-serif]">
      <Sidebar />
      <main className="flex-1 h-full flex flex-col min-w-0">
        <TopBar />
        <NavBar />
        <SubBar />
        <TopTable />
        <Splitter />
        <BottomBar />
        <BottomTable />
      </main>
    </div>
  );
}
